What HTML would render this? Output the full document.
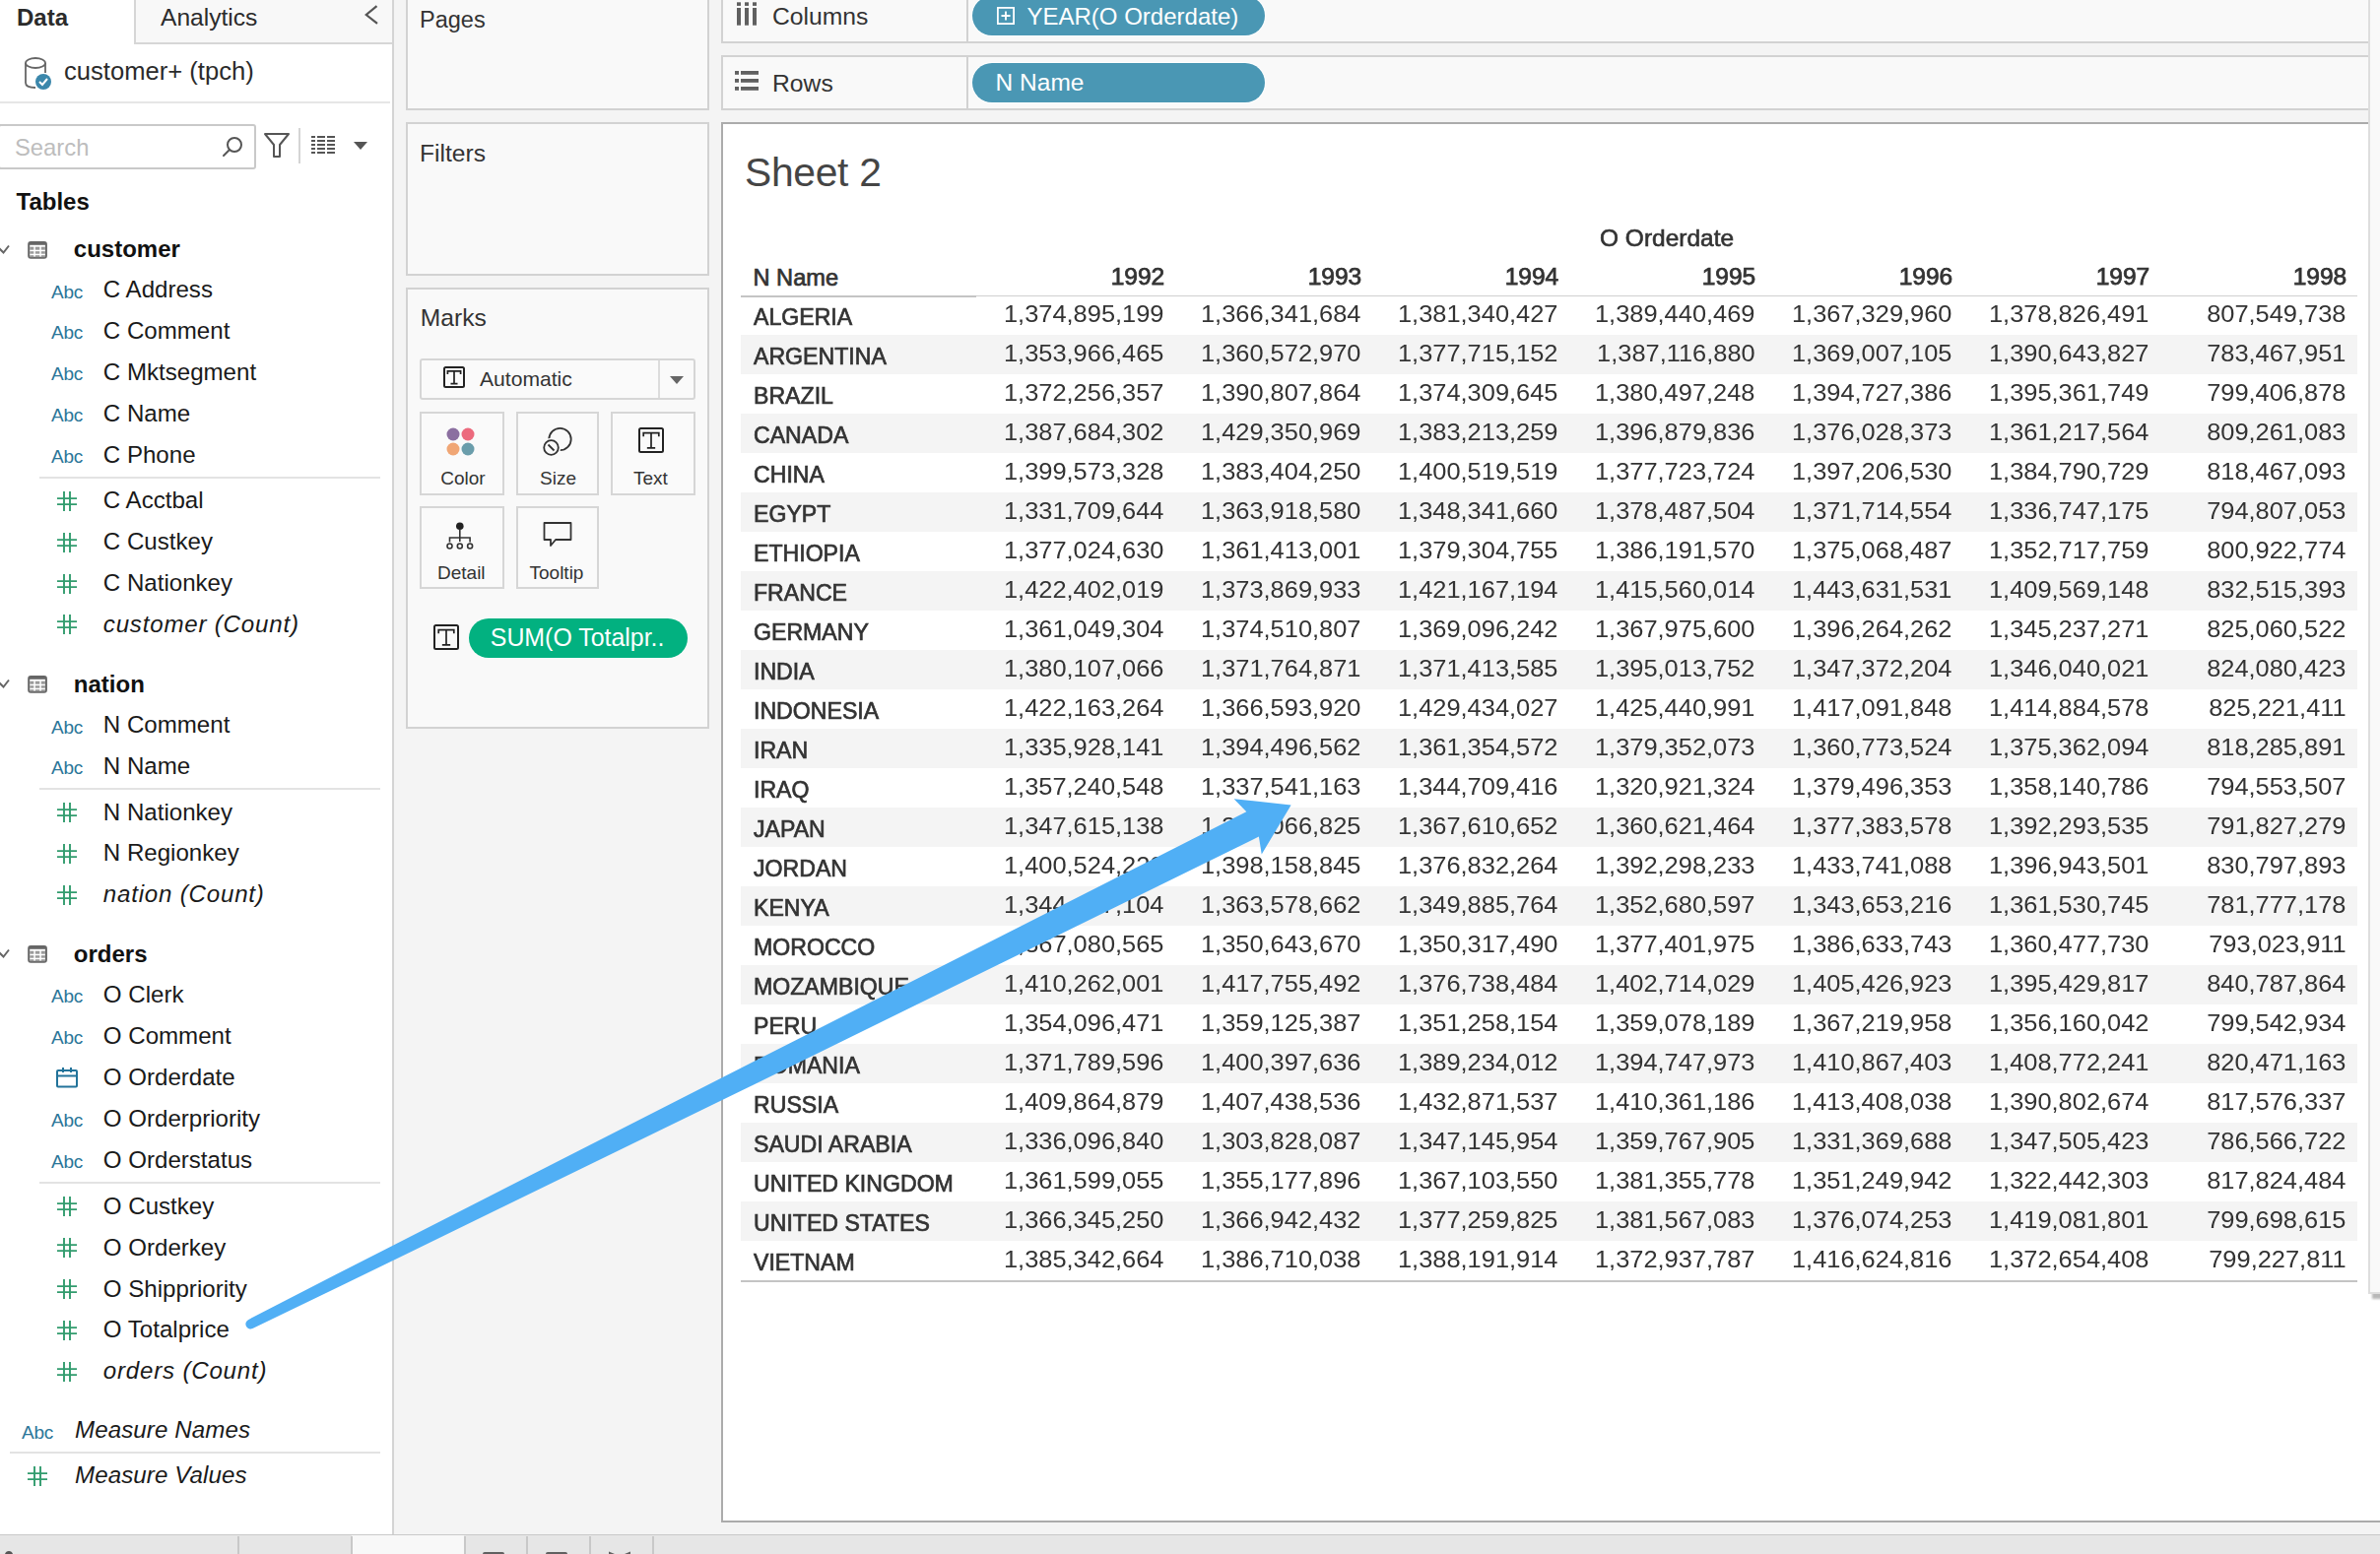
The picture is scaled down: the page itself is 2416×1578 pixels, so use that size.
<!DOCTYPE html>
<html><head><meta charset="utf-8"><style>
html,body{margin:0;padding:0;width:2416px;height:1578px;overflow:hidden;background:#f3f3f3;}
body{position:relative;font-family:"Liberation Sans", sans-serif;}
.r{position:absolute;display:block;}
.t{position:absolute;line-height:1;white-space:pre;font-family:"Liberation Sans", sans-serif;}
</style></head><body>
<div class="r" style="left:0px;top:0px;width:2416px;height:1578px;background:#f4f4f4;"></div>
<div class="r" style="left:0px;top:0px;width:398px;height:1558px;background:#ffffff;"></div>
<div class="r" style="left:398px;top:0px;width:2px;height:1558px;background:#d4d4d4;"></div>
<div class="r" style="left:136px;top:0px;width:262px;height:45px;background:#f8f8f8;border-left:2px solid #d6d6d6;border-bottom:2px solid #d6d6d6;box-sizing:border-box;"></div>
<div class="t" style="left:17.00px;top:5.68px;font-size:24px;color:#2b2b2b;font-weight:bold;font-style:normal;letter-spacing:0px;">Data</div>
<div class="t" style="left:163.00px;top:5.98px;font-size:24.6px;color:#2b2b2b;font-weight:normal;font-style:normal;letter-spacing:0px;">Analytics</div>
<svg class="r" style="left:366px;top:4px;" width="20" height="24" viewBox="0 0 20 24"><path d="M16.5 2.2 L5.8 11 L17 19.8" fill="none" stroke="#555" stroke-width="2.2"/></svg>
<svg class="r" style="left:22px;top:56px;" width="36" height="38" viewBox="0 0 36 38"><ellipse cx="14" cy="8" rx="10" ry="5" fill="none" stroke="#666" stroke-width="1.8"/><path d="M4 8 V28 Q4 33 14 33" fill="none" stroke="#666" stroke-width="1.8"/><path d="M24 8 V18" fill="none" stroke="#666" stroke-width="1.8"/><circle cx="22" cy="27" r="8" fill="#3b87ab"/><path d="M18 27 L21 30 L26 24" fill="none" stroke="#fff" stroke-width="2"/></svg>
<div class="t" style="left:65.00px;top:59.83px;font-size:25.6px;color:#2b2b2b;font-weight:normal;font-style:normal;letter-spacing:0px;">customer+ (tpch)</div>
<div class="r" style="left:0px;top:103px;width:396px;height:2px;background:#e6e6e6;"></div>
<div class="r" style="left:-2px;top:126px;width:262px;height:46px;background:#fff;border:2px solid #c9c9c9;border-radius:3px;box-sizing:border-box;"></div>
<div class="t" style="left:15.00px;top:137.85px;font-size:23.8px;color:#bdbdbd;font-weight:normal;font-style:normal;letter-spacing:0px;">Search</div>
<svg class="r" style="left:222px;top:134px;" width="26" height="28" viewBox="0 0 26 28"><circle cx="16" cy="13" r="7" fill="none" stroke="#555" stroke-width="2"/><path d="M11 18 L5 24" stroke="#555" stroke-width="2" stroke-linecap="round"/></svg>
<svg class="r" style="left:266px;top:134px;" width="30" height="28" viewBox="0 0 30 28"><path d="M3 2 H27 L18 13 V25 H12 V13 Z" fill="none" stroke="#555" stroke-width="2" stroke-linejoin="round"/></svg>
<div class="r" style="left:303px;top:130px;width:2px;height:36px;background:#d4d4d4;"></div>
<svg class="r" style="left:314px;top:136px;" width="28" height="22" viewBox="0 0 28 22"><rect x="2" y="2" width="4" height="2" fill="#555"/><rect x="8" y="2" width="8" height="2" fill="#555"/><rect x="18" y="2" width="8" height="2" fill="#555"/><rect x="2" y="6" width="4" height="2" fill="#555"/><rect x="8" y="6" width="8" height="2" fill="#555"/><rect x="18" y="6" width="8" height="2" fill="#555"/><rect x="2" y="10" width="4" height="2" fill="#555"/><rect x="8" y="10" width="8" height="2" fill="#555"/><rect x="18" y="10" width="8" height="2" fill="#555"/><rect x="2" y="14" width="4" height="2" fill="#555"/><rect x="8" y="14" width="8" height="2" fill="#555"/><rect x="18" y="14" width="8" height="2" fill="#555"/><rect x="2" y="18" width="4" height="2" fill="#555"/><rect x="8" y="18" width="8" height="2" fill="#555"/><rect x="18" y="18" width="8" height="2" fill="#555"/></svg>
<svg class="r" style="left:356px;top:141px;" width="20" height="14" viewBox="0 0 20 14"><path d="M3 3 H17 L10 11 Z" fill="#555"/></svg>
<div class="t" style="left:16.50px;top:192.68px;font-size:24px;color:#111;font-weight:bold;font-style:normal;letter-spacing:0px;">Tables</div>
<svg class="r" style="left:0px;top:247px;" width="12" height="14" viewBox="0 0 12 14"><path d="M-2 4 L3.5 9.5 L9 2.5" fill="none" stroke="#666" stroke-width="2"/></svg>
<svg class="r" style="left:27px;top:243.5px;" width="23" height="20" viewBox="0 0 23 20"><rect x="2.2" y="2" width="17.7" height="15.8" rx="2" fill="none" stroke="#666" stroke-width="2"/><rect x="2.2" y="2" width="17.7" height="2.8" fill="#666"/><rect x="3.2" y="6.7" width="4.1" height="3" fill="#9a9a9a"/><rect x="3.2" y="11.2" width="4.1" height="2.5" fill="#9a9a9a"/><rect x="3.2" y="15.2" width="4.1" height="2" fill="#9a9a9a"/><rect x="8.8" y="6.7" width="4.5" height="3" fill="#9a9a9a"/><rect x="8.8" y="11.2" width="4.5" height="2.5" fill="#9a9a9a"/><rect x="8.8" y="15.2" width="4.5" height="2" fill="#9a9a9a"/><rect x="14.8" y="6.7" width="4.1" height="3" fill="#9a9a9a"/><rect x="14.8" y="11.2" width="4.1" height="2.5" fill="#9a9a9a"/><rect x="14.8" y="15.2" width="4.1" height="2" fill="#9a9a9a"/></svg>
<div class="t" style="left:74.80px;top:241.48px;font-size:24px;color:#111;font-weight:bold;font-style:normal;letter-spacing:0px;">customer</div>
<div class="t" style="left:52.00px;top:286.62px;font-size:19px;color:#2b7699;font-weight:normal;font-style:normal;letter-spacing:-0.2px;">Abc</div>
<div class="t" style="left:104.80px;top:282.30px;font-size:24.1px;color:#1a1a1a;font-weight:normal;font-style:normal;letter-spacing:0px;">C Address</div>
<div class="t" style="left:52.00px;top:328.47px;font-size:19px;color:#2b7699;font-weight:normal;font-style:normal;letter-spacing:-0.2px;">Abc</div>
<div class="t" style="left:104.80px;top:324.15px;font-size:24.1px;color:#1a1a1a;font-weight:normal;font-style:normal;letter-spacing:0px;">C Comment</div>
<div class="t" style="left:52.00px;top:370.32px;font-size:19px;color:#2b7699;font-weight:normal;font-style:normal;letter-spacing:-0.2px;">Abc</div>
<div class="t" style="left:104.80px;top:366.00px;font-size:24.1px;color:#1a1a1a;font-weight:normal;font-style:normal;letter-spacing:0px;">C Mktsegment</div>
<div class="t" style="left:52.00px;top:412.17px;font-size:19px;color:#2b7699;font-weight:normal;font-style:normal;letter-spacing:-0.2px;">Abc</div>
<div class="t" style="left:104.80px;top:407.85px;font-size:24.1px;color:#1a1a1a;font-weight:normal;font-style:normal;letter-spacing:0px;">C Name</div>
<div class="t" style="left:52.00px;top:454.02px;font-size:19px;color:#2b7699;font-weight:normal;font-style:normal;letter-spacing:-0.2px;">Abc</div>
<div class="t" style="left:104.80px;top:449.70px;font-size:24.1px;color:#1a1a1a;font-weight:normal;font-style:normal;letter-spacing:0px;">C Phone</div>
<div class="r" style="left:40px;top:483.5px;width:346px;height:2px;background:#e3e3e3;"></div>
<svg class="r" style="left:57px;top:497.79999999999995px;" width="22" height="22" viewBox="0 0 22 22"><path d="M8 1 V21 M14 1 V21 M1 8.1 H21 M1 14.1 H21" stroke="#329c6e" stroke-width="1.9" fill="none"/></svg>
<div class="t" style="left:104.80px;top:496.40px;font-size:24.1px;color:#1a1a1a;font-weight:normal;font-style:normal;letter-spacing:0px;">C Acctbal</div>
<svg class="r" style="left:57px;top:539.65px;" width="22" height="22" viewBox="0 0 22 22"><path d="M8 1 V21 M14 1 V21 M1 8.1 H21 M1 14.1 H21" stroke="#329c6e" stroke-width="1.9" fill="none"/></svg>
<div class="t" style="left:104.80px;top:538.25px;font-size:24.1px;color:#1a1a1a;font-weight:normal;font-style:normal;letter-spacing:0px;">C Custkey</div>
<svg class="r" style="left:57px;top:581.5px;" width="22" height="22" viewBox="0 0 22 22"><path d="M8 1 V21 M14 1 V21 M1 8.1 H21 M1 14.1 H21" stroke="#329c6e" stroke-width="1.9" fill="none"/></svg>
<div class="t" style="left:104.80px;top:580.10px;font-size:24.1px;color:#1a1a1a;font-weight:normal;font-style:normal;letter-spacing:0px;">C Nationkey</div>
<svg class="r" style="left:57px;top:623.3499999999999px;" width="22" height="22" viewBox="0 0 22 22"><path d="M8 1 V21 M14 1 V21 M1 8.1 H21 M1 14.1 H21" stroke="#329c6e" stroke-width="1.9" fill="none"/></svg>
<div class="t" style="left:104.80px;top:621.95px;font-size:24.1px;color:#1a1a1a;font-weight:normal;font-style:italic;letter-spacing:0.8px;">customer (Count)</div>
<svg class="r" style="left:0px;top:688.4px;" width="12" height="14" viewBox="0 0 12 14"><path d="M-2 4 L3.5 9.5 L9 2.5" fill="none" stroke="#666" stroke-width="2"/></svg>
<svg class="r" style="left:27px;top:684.9px;" width="23" height="20" viewBox="0 0 23 20"><rect x="2.2" y="2" width="17.7" height="15.8" rx="2" fill="none" stroke="#666" stroke-width="2"/><rect x="2.2" y="2" width="17.7" height="2.8" fill="#666"/><rect x="3.2" y="6.7" width="4.1" height="3" fill="#9a9a9a"/><rect x="3.2" y="11.2" width="4.1" height="2.5" fill="#9a9a9a"/><rect x="3.2" y="15.2" width="4.1" height="2" fill="#9a9a9a"/><rect x="8.8" y="6.7" width="4.5" height="3" fill="#9a9a9a"/><rect x="8.8" y="11.2" width="4.5" height="2.5" fill="#9a9a9a"/><rect x="8.8" y="15.2" width="4.5" height="2" fill="#9a9a9a"/><rect x="14.8" y="6.7" width="4.1" height="3" fill="#9a9a9a"/><rect x="14.8" y="11.2" width="4.1" height="2.5" fill="#9a9a9a"/><rect x="14.8" y="15.2" width="4.1" height="2" fill="#9a9a9a"/></svg>
<div class="t" style="left:74.80px;top:682.88px;font-size:24px;color:#111;font-weight:bold;font-style:normal;letter-spacing:0px;">nation</div>
<div class="t" style="left:52.00px;top:728.52px;font-size:19px;color:#2b7699;font-weight:normal;font-style:normal;letter-spacing:-0.2px;">Abc</div>
<div class="t" style="left:104.80px;top:724.20px;font-size:24.1px;color:#1a1a1a;font-weight:normal;font-style:normal;letter-spacing:0px;">N Comment</div>
<div class="t" style="left:52.00px;top:770.37px;font-size:19px;color:#2b7699;font-weight:normal;font-style:normal;letter-spacing:-0.2px;">Abc</div>
<div class="t" style="left:104.80px;top:766.05px;font-size:24.1px;color:#1a1a1a;font-weight:normal;font-style:normal;letter-spacing:0px;">N Name</div>
<div class="r" style="left:40px;top:800px;width:346px;height:2px;background:#e3e3e3;"></div>
<svg class="r" style="left:57px;top:814.0px;" width="22" height="22" viewBox="0 0 22 22"><path d="M8 1 V21 M14 1 V21 M1 8.1 H21 M1 14.1 H21" stroke="#329c6e" stroke-width="1.9" fill="none"/></svg>
<div class="t" style="left:104.80px;top:812.60px;font-size:24.1px;color:#1a1a1a;font-weight:normal;font-style:normal;letter-spacing:0px;">N Nationkey</div>
<svg class="r" style="left:57px;top:855.85px;" width="22" height="22" viewBox="0 0 22 22"><path d="M8 1 V21 M14 1 V21 M1 8.1 H21 M1 14.1 H21" stroke="#329c6e" stroke-width="1.9" fill="none"/></svg>
<div class="t" style="left:104.80px;top:854.45px;font-size:24.1px;color:#1a1a1a;font-weight:normal;font-style:normal;letter-spacing:0px;">N Regionkey</div>
<svg class="r" style="left:57px;top:897.7px;" width="22" height="22" viewBox="0 0 22 22"><path d="M8 1 V21 M14 1 V21 M1 8.1 H21 M1 14.1 H21" stroke="#329c6e" stroke-width="1.9" fill="none"/></svg>
<div class="t" style="left:104.80px;top:896.30px;font-size:24.1px;color:#1a1a1a;font-weight:normal;font-style:italic;letter-spacing:0.8px;">nation (Count)</div>
<svg class="r" style="left:0px;top:962.3px;" width="12" height="14" viewBox="0 0 12 14"><path d="M-2 4 L3.5 9.5 L9 2.5" fill="none" stroke="#666" stroke-width="2"/></svg>
<svg class="r" style="left:27px;top:958.8px;" width="23" height="20" viewBox="0 0 23 20"><rect x="2.2" y="2" width="17.7" height="15.8" rx="2" fill="none" stroke="#666" stroke-width="2"/><rect x="2.2" y="2" width="17.7" height="2.8" fill="#666"/><rect x="3.2" y="6.7" width="4.1" height="3" fill="#9a9a9a"/><rect x="3.2" y="11.2" width="4.1" height="2.5" fill="#9a9a9a"/><rect x="3.2" y="15.2" width="4.1" height="2" fill="#9a9a9a"/><rect x="8.8" y="6.7" width="4.5" height="3" fill="#9a9a9a"/><rect x="8.8" y="11.2" width="4.5" height="2.5" fill="#9a9a9a"/><rect x="8.8" y="15.2" width="4.5" height="2" fill="#9a9a9a"/><rect x="14.8" y="6.7" width="4.1" height="3" fill="#9a9a9a"/><rect x="14.8" y="11.2" width="4.1" height="2.5" fill="#9a9a9a"/><rect x="14.8" y="15.2" width="4.1" height="2" fill="#9a9a9a"/></svg>
<div class="t" style="left:74.80px;top:956.78px;font-size:24px;color:#111;font-weight:bold;font-style:normal;letter-spacing:0px;">orders</div>
<div class="t" style="left:52.00px;top:1002.42px;font-size:19px;color:#2b7699;font-weight:normal;font-style:normal;letter-spacing:-0.2px;">Abc</div>
<div class="t" style="left:104.80px;top:998.10px;font-size:24.1px;color:#1a1a1a;font-weight:normal;font-style:normal;letter-spacing:0px;">O Clerk</div>
<div class="t" style="left:52.00px;top:1044.27px;font-size:19px;color:#2b7699;font-weight:normal;font-style:normal;letter-spacing:-0.2px;">Abc</div>
<div class="t" style="left:104.80px;top:1039.95px;font-size:24.1px;color:#1a1a1a;font-weight:normal;font-style:normal;letter-spacing:0px;">O Comment</div>
<svg class="r" style="left:56px;top:1082.2px;" width="24" height="24" viewBox="0 0 24 24"><rect x="2" y="5" width="20" height="16.5" rx="1" fill="none" stroke="#22739a" stroke-width="2"/><path d="M2 10.5 H22" stroke="#22739a" stroke-width="2"/><path d="M8 2 V7 M16 2 V7" stroke="#22739a" stroke-width="2"/></svg>
<div class="t" style="left:104.80px;top:1081.80px;font-size:24.1px;color:#1a1a1a;font-weight:normal;font-style:normal;letter-spacing:0px;">O Orderdate</div>
<div class="t" style="left:52.00px;top:1127.97px;font-size:19px;color:#2b7699;font-weight:normal;font-style:normal;letter-spacing:-0.2px;">Abc</div>
<div class="t" style="left:104.80px;top:1123.65px;font-size:24.1px;color:#1a1a1a;font-weight:normal;font-style:normal;letter-spacing:0px;">O Orderpriority</div>
<div class="t" style="left:52.00px;top:1169.82px;font-size:19px;color:#2b7699;font-weight:normal;font-style:normal;letter-spacing:-0.2px;">Abc</div>
<div class="t" style="left:104.80px;top:1165.50px;font-size:24.1px;color:#1a1a1a;font-weight:normal;font-style:normal;letter-spacing:0px;">O Orderstatus</div>
<div class="r" style="left:40px;top:1200px;width:346px;height:2px;background:#e3e3e3;"></div>
<svg class="r" style="left:57px;top:1214.3px;" width="22" height="22" viewBox="0 0 22 22"><path d="M8 1 V21 M14 1 V21 M1 8.1 H21 M1 14.1 H21" stroke="#329c6e" stroke-width="1.9" fill="none"/></svg>
<div class="t" style="left:104.80px;top:1212.90px;font-size:24.1px;color:#1a1a1a;font-weight:normal;font-style:normal;letter-spacing:0px;">O Custkey</div>
<svg class="r" style="left:57px;top:1256.1499999999999px;" width="22" height="22" viewBox="0 0 22 22"><path d="M8 1 V21 M14 1 V21 M1 8.1 H21 M1 14.1 H21" stroke="#329c6e" stroke-width="1.9" fill="none"/></svg>
<div class="t" style="left:104.80px;top:1254.75px;font-size:24.1px;color:#1a1a1a;font-weight:normal;font-style:normal;letter-spacing:0px;">O Orderkey</div>
<svg class="r" style="left:57px;top:1298.0px;" width="22" height="22" viewBox="0 0 22 22"><path d="M8 1 V21 M14 1 V21 M1 8.1 H21 M1 14.1 H21" stroke="#329c6e" stroke-width="1.9" fill="none"/></svg>
<div class="t" style="left:104.80px;top:1296.60px;font-size:24.1px;color:#1a1a1a;font-weight:normal;font-style:normal;letter-spacing:0px;">O Shippriority</div>
<svg class="r" style="left:57px;top:1339.85px;" width="22" height="22" viewBox="0 0 22 22"><path d="M8 1 V21 M14 1 V21 M1 8.1 H21 M1 14.1 H21" stroke="#329c6e" stroke-width="1.9" fill="none"/></svg>
<div class="t" style="left:104.80px;top:1338.45px;font-size:24.1px;color:#1a1a1a;font-weight:normal;font-style:normal;letter-spacing:0px;">O Totalprice</div>
<svg class="r" style="left:57px;top:1381.7px;" width="22" height="22" viewBox="0 0 22 22"><path d="M8 1 V21 M14 1 V21 M1 8.1 H21 M1 14.1 H21" stroke="#329c6e" stroke-width="1.9" fill="none"/></svg>
<div class="t" style="left:104.80px;top:1380.30px;font-size:24.1px;color:#1a1a1a;font-weight:normal;font-style:italic;letter-spacing:0.8px;">orders (Count)</div>
<div class="t" style="left:22.00px;top:1444.72px;font-size:19px;color:#2b7699;font-weight:normal;font-style:normal;letter-spacing:-0.2px;">Abc</div>
<div class="t" style="left:76.00px;top:1440.40px;font-size:24.1px;color:#1a1a1a;font-weight:normal;font-style:italic;letter-spacing:0.1px;">Measure Names</div>
<div class="r" style="left:10px;top:1474px;width:376px;height:2px;background:#e3e3e3;"></div>
<svg class="r" style="left:27px;top:1488.2px;" width="22" height="22" viewBox="0 0 22 22"><path d="M8 1 V21 M14 1 V21 M1 8.1 H21 M1 14.1 H21" stroke="#329c6e" stroke-width="1.9" fill="none"/></svg>
<div class="t" style="left:76.00px;top:1486.10px;font-size:24.1px;color:#1a1a1a;font-weight:normal;font-style:italic;letter-spacing:0.1px;">Measure Values</div>
<div class="r" style="left:0px;top:1558px;width:2416px;height:20px;background:#e6e6e6;border-top:1.5px solid #c9c9c9;box-sizing:border-box;"></div>
<div class="r" style="left:357px;top:1559px;width:114px;height:19px;background:#f8f8f8;"></div>
<div class="r" style="left:241px;top:1560px;width:1.5px;height:18px;background:#c8c8c8;"></div>
<div class="r" style="left:356px;top:1560px;width:1.5px;height:18px;background:#c8c8c8;"></div>
<div class="r" style="left:471px;top:1560px;width:1.5px;height:18px;background:#c8c8c8;"></div>
<div class="r" style="left:534px;top:1560px;width:1.5px;height:18px;background:#c8c8c8;"></div>
<div class="r" style="left:598px;top:1560px;width:1.5px;height:18px;background:#c8c8c8;"></div>
<div class="r" style="left:662px;top:1560px;width:1.5px;height:18px;background:#c8c8c8;"></div>
<div class="r" style="left:490px;top:1576px;width:22px;height:3px;background:#606060;border-radius:2px 2px 0 0;"></div>
<div class="r" style="left:554px;top:1576px;width:22px;height:3px;background:#606060;border-radius:2px 2px 0 0;"></div>
<svg class="r" style="left:616px;top:1574px;" width="26" height="4" viewBox="0 0 26 4"><path d="M2 1.5 L8 4 L2 4 Z M24 1.5 L18 4 L24 4 Z" fill="#606060"/></svg>
<svg class="r" style="left:0px;top:1572px;" width="16" height="6" viewBox="0 0 16 6"><path d="M5 6 Q6 3 9 3 Q12 3 13 6 Z" fill="#555"/></svg>
<div class="r" style="left:412px;top:-4px;width:308px;height:116px;background:#f9f9f9;border:2px solid #d2d2d2;box-sizing:border-box;"></div>
<div class="t" style="left:426.00px;top:8.71px;font-size:23.5px;color:#333;font-weight:normal;font-style:normal;letter-spacing:0px;">Pages</div>
<div class="r" style="left:412px;top:124px;width:308px;height:156px;background:#f9f9f9;border:2px solid #d2d2d2;box-sizing:border-box;"></div>
<div class="t" style="left:426.00px;top:143.88px;font-size:24.6px;color:#333;font-weight:normal;font-style:normal;letter-spacing:0px;">Filters</div>
<div class="r" style="left:412px;top:292px;width:308px;height:448px;background:#f9f9f9;border:2px solid #d2d2d2;box-sizing:border-box;"></div>
<div class="t" style="left:426.80px;top:311.18px;font-size:24.6px;color:#333;font-weight:normal;font-style:normal;letter-spacing:0px;">Marks</div>
<div class="r" style="left:426px;top:364px;width:280px;height:42px;background:#fafafa;border:2px solid #d6d6d6;border-radius:3px;box-sizing:border-box;"></div>
<div class="r" style="left:668px;top:366px;width:2px;height:38px;background:#dcdcdc;"></div>
<svg class="r" style="left:677px;top:379px;" width="20" height="14" viewBox="0 0 20 14"><path d="M3 3 H17 L10 11 Z" fill="#666"/></svg>
<svg class="r" style="left:450px;top:372px;" width="22" height="22" viewBox="0 0 22 22"><rect x="1" y="1" width="20" height="20" rx="1.5" fill="none" stroke="#222" stroke-width="2"/><path d="M4.40 7.92 V4.84 H17.60 V7.92 M11.00 4.84 V17.60 M7.48 17.60 H14.52" stroke="#222" stroke-width="1.7" fill="none"/></svg>
<div class="t" style="left:487.00px;top:373.74px;font-size:21.1px;color:#333;font-weight:normal;font-style:normal;letter-spacing:0px;">Automatic</div>
<div class="r" style="left:426px;top:418px;width:86px;height:85px;background:#fafafa;border:2px solid #d6d6d6;box-sizing:border-box;"></div>
<div class="t" style="left:447.30px;top:475.92px;font-size:19px;color:#333;font-weight:normal;font-style:normal;letter-spacing:0px;">Color</div>
<div class="r" style="left:524px;top:418px;width:84px;height:85px;background:#fafafa;border:2px solid #d6d6d6;box-sizing:border-box;"></div>
<div class="t" style="left:548.00px;top:475.92px;font-size:19px;color:#333;font-weight:normal;font-style:normal;letter-spacing:0px;">Size</div>
<div class="r" style="left:620px;top:418px;width:86px;height:85px;background:#fafafa;border:2px solid #d6d6d6;box-sizing:border-box;"></div>
<div class="t" style="left:643.00px;top:475.92px;font-size:19px;color:#333;font-weight:normal;font-style:normal;letter-spacing:0px;">Text</div>
<div class="r" style="left:426px;top:514px;width:86px;height:84px;background:#fafafa;border:2px solid #d6d6d6;box-sizing:border-box;"></div>
<div class="t" style="left:444.00px;top:571.92px;font-size:19px;color:#333;font-weight:normal;font-style:normal;letter-spacing:0px;">Detail</div>
<div class="r" style="left:524px;top:514px;width:84px;height:84px;background:#fafafa;border:2px solid #d6d6d6;box-sizing:border-box;"></div>
<div class="t" style="left:537.50px;top:571.92px;font-size:19px;color:#333;font-weight:normal;font-style:normal;letter-spacing:0px;">Tooltip</div>
<svg class="r" style="left:453px;top:433.5px;" width="32" height="32" viewBox="0 0 32 32"><circle cx="7" cy="7" r="6.5" fill="#8b6fa0"/><circle cx="22" cy="7" r="6.5" fill="#ec6a7d"/><circle cx="7" cy="22" r="6.5" fill="#f0a675"/><circle cx="22" cy="22" r="6.5" fill="#6a9dab"/></svg>
<svg class="r" style="left:550px;top:432px;" width="32" height="32" viewBox="0 0 32 32"><circle cx="18.5" cy="14" r="11.2" fill="none" stroke="#333" stroke-width="1.8"/><circle cx="9.5" cy="22.5" r="7.3" fill="#fafafa" stroke="#fafafa" stroke-width="5"/><circle cx="9.5" cy="22.5" r="7.3" fill="none" stroke="#333" stroke-width="1.8"/><path d="M6.5 19.5 L12.5 25.5" stroke="#333" stroke-width="1.8"/></svg>
<svg class="r" style="left:648px;top:434px;" width="26" height="26" viewBox="0 0 26 26"><rect x="1" y="1" width="24" height="24" rx="1.5" fill="none" stroke="#222" stroke-width="2"/><path d="M5.20 9.36 V5.72 H20.80 V9.36 M13.00 5.72 V20.80 M8.84 20.80 H17.16" stroke="#222" stroke-width="1.7" fill="none"/></svg>
<svg class="r" style="left:452px;top:530px;" width="30" height="30" viewBox="0 0 30 30"><circle cx="14.8" cy="4.2" r="3.8" fill="#222"/><path d="M14.8 7.5 V20 M4.5 20.5 V16 H25.1 V20.5" stroke="#333" stroke-width="1.6" fill="none"/><circle cx="4.5" cy="24.5" r="2.5" fill="none" stroke="#333" stroke-width="1.6"/><circle cx="14.8" cy="24.5" r="2.5" fill="none" stroke="#333" stroke-width="1.6"/><circle cx="25.1" cy="24.5" r="2.5" fill="none" stroke="#333" stroke-width="1.6"/></svg>
<svg class="r" style="left:550px;top:528px;" width="32" height="30" viewBox="0 0 32 30"><path d="M2.5 3 H29.5 V20 H14 L9 26 V20 H2.5 Z" fill="none" stroke="#333" stroke-width="1.8" stroke-linejoin="round"/></svg>
<svg class="r" style="left:440px;top:634px;" width="26" height="26" viewBox="0 0 26 26"><rect x="1" y="1" width="24" height="24" rx="1.5" fill="none" stroke="#222" stroke-width="2"/><path d="M5.20 9.36 V5.72 H20.80 V9.36 M13.00 5.72 V20.80 M8.84 20.80 H17.16" stroke="#222" stroke-width="1.7" fill="none"/></svg>
<div class="r" style="left:476px;top:628px;width:222px;height:40px;background:#02b180;border-radius:20px;"></div>
<div class="t" style="left:497.80px;top:634.92px;font-size:24.9px;color:#ffffff;font-weight:normal;font-style:normal;letter-spacing:0px;">SUM(O Totalpr..</div>
<div class="r" style="left:732px;top:-4px;width:1680px;height:48px;background:#f9f9f9;border:2px solid #d2d2d2;box-sizing:border-box;"></div>
<div class="r" style="left:981px;top:-4px;width:2px;height:48px;background:#d2d2d2;"></div>
<svg class="r" style="left:744px;top:2px" width="28" height="24" viewBox="0 0 28 24"><rect x="4" y="0.3" width="4" height="3.6" fill="#606060"/><rect x="12" y="0.3" width="4" height="3.6" fill="#606060"/><rect x="20" y="0.3" width="4" height="3.6" fill="#606060"/><rect x="4" y="6" width="4" height="17.7" fill="#606060"/><rect x="12" y="6" width="4" height="17.7" fill="#606060"/><rect x="20" y="6" width="4" height="17.7" fill="#606060"/></svg>
<div class="t" style="left:784.00px;top:4.79px;font-size:24.7px;color:#333;font-weight:normal;font-style:normal;letter-spacing:0px;">Columns</div>
<div class="r" style="left:987px;top:-4px;width:297px;height:40px;background:#4a97b4;border-radius:20px;box-shadow:0 0 0 1px #fff;"></div>
<svg class="r" style="left:1011px;top:6px;" width="20" height="20" viewBox="0 0 20 20"><rect x="1.9" y="1.9" width="16.2" height="16.2" fill="none" stroke="#fff" stroke-width="1.8"/><path d="M10 5.5 V14.5 M5.5 10 H14.5" stroke="#fff" stroke-width="1.8"/></svg>
<div class="t" style="left:1042.50px;top:5.48px;font-size:24px;color:#fff;font-weight:normal;font-style:normal;letter-spacing:0px;">YEAR(O Orderdate)</div>
<div class="r" style="left:732px;top:56px;width:1680px;height:56px;background:#f9f9f9;border:2px solid #d2d2d2;box-sizing:border-box;"></div>
<div class="r" style="left:981px;top:56px;width:2px;height:56px;background:#d2d2d2;"></div>
<svg class="r" style="left:744px;top:70px" width="28" height="24" viewBox="0 0 28 24"><rect x="2" y="2" width="4" height="3.8" fill="#606060"/><rect x="8" y="2" width="18" height="3.8" fill="#606060"/><rect x="2" y="10" width="4" height="3.8" fill="#606060"/><rect x="8" y="10" width="18" height="3.8" fill="#606060"/><rect x="2" y="18" width="4" height="3.8" fill="#606060"/><rect x="8" y="18" width="18" height="3.8" fill="#606060"/></svg>
<div class="t" style="left:784.00px;top:73.09px;font-size:24.7px;color:#333;font-weight:normal;font-style:normal;letter-spacing:0px;">Rows</div>
<div class="r" style="left:987px;top:64px;width:297px;height:40px;background:#4a97b4;border-radius:20px;box-shadow:0 0 0 1px #fff;"></div>
<div class="t" style="left:1010.60px;top:71.56px;font-size:24.5px;color:#fff;font-weight:normal;font-style:normal;letter-spacing:0px;">N Name</div>
<div class="r" style="left:732px;top:124px;width:1690px;height:1422px;background:#ffffff;border:2px solid #ababab;box-sizing:border-box;"></div>
<div class="t" style="left:756.00px;top:155.46px;font-size:40.8px;color:#454545;font-weight:normal;font-style:normal;letter-spacing:-0.3px;">Sheet 2</div>
<div class="t" style="left:1624.00px;top:229.98px;font-size:24px;color:#333;font-weight:normal;font-style:normal;letter-spacing:0px;-webkit-text-stroke:0.6px #333;transform:scaleX(1.02);transform-origin:0 50%;">O Orderdate</div>
<div class="t" style="left:764.50px;top:270.82px;font-size:23.6px;color:#333;font-weight:normal;font-style:normal;letter-spacing:0px;-webkit-text-stroke:0.7px #333;">N Name</div>
<div class="t" style="right:1233.50px;top:270.01px;font-size:23.5px;color:#333;font-weight:normal;font-style:normal;letter-spacing:0px;-webkit-text-stroke:0.75px #333;transform:scaleX(1.045);transform-origin:100% 50%;">1992</div>
<div class="t" style="right:1033.50px;top:270.01px;font-size:23.5px;color:#333;font-weight:normal;font-style:normal;letter-spacing:0px;-webkit-text-stroke:0.75px #333;transform:scaleX(1.045);transform-origin:100% 50%;">1993</div>
<div class="t" style="right:833.50px;top:270.01px;font-size:23.5px;color:#333;font-weight:normal;font-style:normal;letter-spacing:0px;-webkit-text-stroke:0.75px #333;transform:scaleX(1.045);transform-origin:100% 50%;">1994</div>
<div class="t" style="right:633.50px;top:270.01px;font-size:23.5px;color:#333;font-weight:normal;font-style:normal;letter-spacing:0px;-webkit-text-stroke:0.75px #333;transform:scaleX(1.045);transform-origin:100% 50%;">1995</div>
<div class="t" style="right:433.50px;top:270.01px;font-size:23.5px;color:#333;font-weight:normal;font-style:normal;letter-spacing:0px;-webkit-text-stroke:0.75px #333;transform:scaleX(1.045);transform-origin:100% 50%;">1996</div>
<div class="t" style="right:233.50px;top:270.01px;font-size:23.5px;color:#333;font-weight:normal;font-style:normal;letter-spacing:0px;-webkit-text-stroke:0.75px #333;transform:scaleX(1.045);transform-origin:100% 50%;">1997</div>
<div class="t" style="right:33.50px;top:270.01px;font-size:23.5px;color:#333;font-weight:normal;font-style:normal;letter-spacing:0px;-webkit-text-stroke:0.75px #333;transform:scaleX(1.045);transform-origin:100% 50%;">1998</div>
<div class="r" style="left:752px;top:300px;width:239px;height:2px;background:#c4c4c4;"></div>
<div class="r" style="left:991px;top:300px;width:1402px;height:1px;background:#d0d0d0;"></div>
<div class="r" style="left:752px;top:340.00px;width:1641px;height:39.5px;background:#f4f4f4"></div>
<div class="r" style="left:752px;top:420.00px;width:1641px;height:39.5px;background:#f4f4f4"></div>
<div class="r" style="left:752px;top:500.00px;width:1641px;height:39.5px;background:#f4f4f4"></div>
<div class="r" style="left:752px;top:580.00px;width:1641px;height:39.5px;background:#f4f4f4"></div>
<div class="r" style="left:752px;top:660.00px;width:1641px;height:39.5px;background:#f4f4f4"></div>
<div class="r" style="left:752px;top:740.00px;width:1641px;height:39.5px;background:#f4f4f4"></div>
<div class="r" style="left:752px;top:820.00px;width:1641px;height:39.5px;background:#f4f4f4"></div>
<div class="r" style="left:752px;top:900.00px;width:1641px;height:39.5px;background:#f4f4f4"></div>
<div class="r" style="left:752px;top:980.00px;width:1641px;height:39.5px;background:#f4f4f4"></div>
<div class="r" style="left:752px;top:1060.00px;width:1641px;height:39.5px;background:#f4f4f4"></div>
<div class="r" style="left:752px;top:1140.00px;width:1641px;height:39.5px;background:#f4f4f4"></div>
<div class="r" style="left:752px;top:1220.00px;width:1641px;height:39.5px;background:#f4f4f4"></div>
<div class="t" style="left:764.50px;top:309.53px;font-size:24px;color:#333;font-weight:normal;font-style:normal;letter-spacing:0px;-webkit-text-stroke:0.7px #333;transform:scaleX(0.963);transform-origin:0 50%;">ALGERIA</div>
<div class="t" style="right:1234.60px;top:307.48px;font-size:24px;color:#333;font-weight:normal;font-style:normal;letter-spacing:0px;transform:scaleX(1.059);transform-origin:100% 50%;">1,374,895,199</div>
<div class="t" style="right:1034.60px;top:307.48px;font-size:24px;color:#333;font-weight:normal;font-style:normal;letter-spacing:0px;transform:scaleX(1.059);transform-origin:100% 50%;">1,366,341,684</div>
<div class="t" style="right:834.60px;top:307.48px;font-size:24px;color:#333;font-weight:normal;font-style:normal;letter-spacing:0px;transform:scaleX(1.059);transform-origin:100% 50%;">1,381,340,427</div>
<div class="t" style="right:634.60px;top:307.48px;font-size:24px;color:#333;font-weight:normal;font-style:normal;letter-spacing:0px;transform:scaleX(1.059);transform-origin:100% 50%;">1,389,440,469</div>
<div class="t" style="right:434.60px;top:307.48px;font-size:24px;color:#333;font-weight:normal;font-style:normal;letter-spacing:0px;transform:scaleX(1.059);transform-origin:100% 50%;">1,367,329,960</div>
<div class="t" style="right:234.60px;top:307.48px;font-size:24px;color:#333;font-weight:normal;font-style:normal;letter-spacing:0px;transform:scaleX(1.059);transform-origin:100% 50%;">1,378,826,491</div>
<div class="t" style="right:34.60px;top:307.48px;font-size:24px;color:#333;font-weight:normal;font-style:normal;letter-spacing:0px;transform:scaleX(1.059);transform-origin:100% 50%;">807,549,738</div>
<div class="t" style="left:764.50px;top:349.53px;font-size:24px;color:#333;font-weight:normal;font-style:normal;letter-spacing:0px;-webkit-text-stroke:0.7px #333;transform:scaleX(0.963);transform-origin:0 50%;">ARGENTINA</div>
<div class="t" style="right:1234.60px;top:347.48px;font-size:24px;color:#333;font-weight:normal;font-style:normal;letter-spacing:0px;transform:scaleX(1.059);transform-origin:100% 50%;">1,353,966,465</div>
<div class="t" style="right:1034.60px;top:347.48px;font-size:24px;color:#333;font-weight:normal;font-style:normal;letter-spacing:0px;transform:scaleX(1.059);transform-origin:100% 50%;">1,360,572,970</div>
<div class="t" style="right:834.60px;top:347.48px;font-size:24px;color:#333;font-weight:normal;font-style:normal;letter-spacing:0px;transform:scaleX(1.059);transform-origin:100% 50%;">1,377,715,152</div>
<div class="t" style="right:634.60px;top:347.48px;font-size:24px;color:#333;font-weight:normal;font-style:normal;letter-spacing:0px;transform:scaleX(1.059);transform-origin:100% 50%;">1,387,116,880</div>
<div class="t" style="right:434.60px;top:347.48px;font-size:24px;color:#333;font-weight:normal;font-style:normal;letter-spacing:0px;transform:scaleX(1.059);transform-origin:100% 50%;">1,369,007,105</div>
<div class="t" style="right:234.60px;top:347.48px;font-size:24px;color:#333;font-weight:normal;font-style:normal;letter-spacing:0px;transform:scaleX(1.059);transform-origin:100% 50%;">1,390,643,827</div>
<div class="t" style="right:34.60px;top:347.48px;font-size:24px;color:#333;font-weight:normal;font-style:normal;letter-spacing:0px;transform:scaleX(1.059);transform-origin:100% 50%;">783,467,951</div>
<div class="t" style="left:764.50px;top:389.53px;font-size:24px;color:#333;font-weight:normal;font-style:normal;letter-spacing:0px;-webkit-text-stroke:0.7px #333;transform:scaleX(0.963);transform-origin:0 50%;">BRAZIL</div>
<div class="t" style="right:1234.60px;top:387.48px;font-size:24px;color:#333;font-weight:normal;font-style:normal;letter-spacing:0px;transform:scaleX(1.059);transform-origin:100% 50%;">1,372,256,357</div>
<div class="t" style="right:1034.60px;top:387.48px;font-size:24px;color:#333;font-weight:normal;font-style:normal;letter-spacing:0px;transform:scaleX(1.059);transform-origin:100% 50%;">1,390,807,864</div>
<div class="t" style="right:834.60px;top:387.48px;font-size:24px;color:#333;font-weight:normal;font-style:normal;letter-spacing:0px;transform:scaleX(1.059);transform-origin:100% 50%;">1,374,309,645</div>
<div class="t" style="right:634.60px;top:387.48px;font-size:24px;color:#333;font-weight:normal;font-style:normal;letter-spacing:0px;transform:scaleX(1.059);transform-origin:100% 50%;">1,380,497,248</div>
<div class="t" style="right:434.60px;top:387.48px;font-size:24px;color:#333;font-weight:normal;font-style:normal;letter-spacing:0px;transform:scaleX(1.059);transform-origin:100% 50%;">1,394,727,386</div>
<div class="t" style="right:234.60px;top:387.48px;font-size:24px;color:#333;font-weight:normal;font-style:normal;letter-spacing:0px;transform:scaleX(1.059);transform-origin:100% 50%;">1,395,361,749</div>
<div class="t" style="right:34.60px;top:387.48px;font-size:24px;color:#333;font-weight:normal;font-style:normal;letter-spacing:0px;transform:scaleX(1.059);transform-origin:100% 50%;">799,406,878</div>
<div class="t" style="left:764.50px;top:429.53px;font-size:24px;color:#333;font-weight:normal;font-style:normal;letter-spacing:0px;-webkit-text-stroke:0.7px #333;transform:scaleX(0.963);transform-origin:0 50%;">CANADA</div>
<div class="t" style="right:1234.60px;top:427.48px;font-size:24px;color:#333;font-weight:normal;font-style:normal;letter-spacing:0px;transform:scaleX(1.059);transform-origin:100% 50%;">1,387,684,302</div>
<div class="t" style="right:1034.60px;top:427.48px;font-size:24px;color:#333;font-weight:normal;font-style:normal;letter-spacing:0px;transform:scaleX(1.059);transform-origin:100% 50%;">1,429,350,969</div>
<div class="t" style="right:834.60px;top:427.48px;font-size:24px;color:#333;font-weight:normal;font-style:normal;letter-spacing:0px;transform:scaleX(1.059);transform-origin:100% 50%;">1,383,213,259</div>
<div class="t" style="right:634.60px;top:427.48px;font-size:24px;color:#333;font-weight:normal;font-style:normal;letter-spacing:0px;transform:scaleX(1.059);transform-origin:100% 50%;">1,396,879,836</div>
<div class="t" style="right:434.60px;top:427.48px;font-size:24px;color:#333;font-weight:normal;font-style:normal;letter-spacing:0px;transform:scaleX(1.059);transform-origin:100% 50%;">1,376,028,373</div>
<div class="t" style="right:234.60px;top:427.48px;font-size:24px;color:#333;font-weight:normal;font-style:normal;letter-spacing:0px;transform:scaleX(1.059);transform-origin:100% 50%;">1,361,217,564</div>
<div class="t" style="right:34.60px;top:427.48px;font-size:24px;color:#333;font-weight:normal;font-style:normal;letter-spacing:0px;transform:scaleX(1.059);transform-origin:100% 50%;">809,261,083</div>
<div class="t" style="left:764.50px;top:469.53px;font-size:24px;color:#333;font-weight:normal;font-style:normal;letter-spacing:0px;-webkit-text-stroke:0.7px #333;transform:scaleX(0.963);transform-origin:0 50%;">CHINA</div>
<div class="t" style="right:1234.60px;top:467.48px;font-size:24px;color:#333;font-weight:normal;font-style:normal;letter-spacing:0px;transform:scaleX(1.059);transform-origin:100% 50%;">1,399,573,328</div>
<div class="t" style="right:1034.60px;top:467.48px;font-size:24px;color:#333;font-weight:normal;font-style:normal;letter-spacing:0px;transform:scaleX(1.059);transform-origin:100% 50%;">1,383,404,250</div>
<div class="t" style="right:834.60px;top:467.48px;font-size:24px;color:#333;font-weight:normal;font-style:normal;letter-spacing:0px;transform:scaleX(1.059);transform-origin:100% 50%;">1,400,519,519</div>
<div class="t" style="right:634.60px;top:467.48px;font-size:24px;color:#333;font-weight:normal;font-style:normal;letter-spacing:0px;transform:scaleX(1.059);transform-origin:100% 50%;">1,377,723,724</div>
<div class="t" style="right:434.60px;top:467.48px;font-size:24px;color:#333;font-weight:normal;font-style:normal;letter-spacing:0px;transform:scaleX(1.059);transform-origin:100% 50%;">1,397,206,530</div>
<div class="t" style="right:234.60px;top:467.48px;font-size:24px;color:#333;font-weight:normal;font-style:normal;letter-spacing:0px;transform:scaleX(1.059);transform-origin:100% 50%;">1,384,790,729</div>
<div class="t" style="right:34.60px;top:467.48px;font-size:24px;color:#333;font-weight:normal;font-style:normal;letter-spacing:0px;transform:scaleX(1.059);transform-origin:100% 50%;">818,467,093</div>
<div class="t" style="left:764.50px;top:509.53px;font-size:24px;color:#333;font-weight:normal;font-style:normal;letter-spacing:0px;-webkit-text-stroke:0.7px #333;transform:scaleX(0.963);transform-origin:0 50%;">EGYPT</div>
<div class="t" style="right:1234.60px;top:507.48px;font-size:24px;color:#333;font-weight:normal;font-style:normal;letter-spacing:0px;transform:scaleX(1.059);transform-origin:100% 50%;">1,331,709,644</div>
<div class="t" style="right:1034.60px;top:507.48px;font-size:24px;color:#333;font-weight:normal;font-style:normal;letter-spacing:0px;transform:scaleX(1.059);transform-origin:100% 50%;">1,363,918,580</div>
<div class="t" style="right:834.60px;top:507.48px;font-size:24px;color:#333;font-weight:normal;font-style:normal;letter-spacing:0px;transform:scaleX(1.059);transform-origin:100% 50%;">1,348,341,660</div>
<div class="t" style="right:634.60px;top:507.48px;font-size:24px;color:#333;font-weight:normal;font-style:normal;letter-spacing:0px;transform:scaleX(1.059);transform-origin:100% 50%;">1,378,487,504</div>
<div class="t" style="right:434.60px;top:507.48px;font-size:24px;color:#333;font-weight:normal;font-style:normal;letter-spacing:0px;transform:scaleX(1.059);transform-origin:100% 50%;">1,371,714,554</div>
<div class="t" style="right:234.60px;top:507.48px;font-size:24px;color:#333;font-weight:normal;font-style:normal;letter-spacing:0px;transform:scaleX(1.059);transform-origin:100% 50%;">1,336,747,175</div>
<div class="t" style="right:34.60px;top:507.48px;font-size:24px;color:#333;font-weight:normal;font-style:normal;letter-spacing:0px;transform:scaleX(1.059);transform-origin:100% 50%;">794,807,053</div>
<div class="t" style="left:764.50px;top:549.53px;font-size:24px;color:#333;font-weight:normal;font-style:normal;letter-spacing:0px;-webkit-text-stroke:0.7px #333;transform:scaleX(0.963);transform-origin:0 50%;">ETHIOPIA</div>
<div class="t" style="right:1234.60px;top:547.48px;font-size:24px;color:#333;font-weight:normal;font-style:normal;letter-spacing:0px;transform:scaleX(1.059);transform-origin:100% 50%;">1,377,024,630</div>
<div class="t" style="right:1034.60px;top:547.48px;font-size:24px;color:#333;font-weight:normal;font-style:normal;letter-spacing:0px;transform:scaleX(1.059);transform-origin:100% 50%;">1,361,413,001</div>
<div class="t" style="right:834.60px;top:547.48px;font-size:24px;color:#333;font-weight:normal;font-style:normal;letter-spacing:0px;transform:scaleX(1.059);transform-origin:100% 50%;">1,379,304,755</div>
<div class="t" style="right:634.60px;top:547.48px;font-size:24px;color:#333;font-weight:normal;font-style:normal;letter-spacing:0px;transform:scaleX(1.059);transform-origin:100% 50%;">1,386,191,570</div>
<div class="t" style="right:434.60px;top:547.48px;font-size:24px;color:#333;font-weight:normal;font-style:normal;letter-spacing:0px;transform:scaleX(1.059);transform-origin:100% 50%;">1,375,068,487</div>
<div class="t" style="right:234.60px;top:547.48px;font-size:24px;color:#333;font-weight:normal;font-style:normal;letter-spacing:0px;transform:scaleX(1.059);transform-origin:100% 50%;">1,352,717,759</div>
<div class="t" style="right:34.60px;top:547.48px;font-size:24px;color:#333;font-weight:normal;font-style:normal;letter-spacing:0px;transform:scaleX(1.059);transform-origin:100% 50%;">800,922,774</div>
<div class="t" style="left:764.50px;top:589.53px;font-size:24px;color:#333;font-weight:normal;font-style:normal;letter-spacing:0px;-webkit-text-stroke:0.7px #333;transform:scaleX(0.963);transform-origin:0 50%;">FRANCE</div>
<div class="t" style="right:1234.60px;top:587.48px;font-size:24px;color:#333;font-weight:normal;font-style:normal;letter-spacing:0px;transform:scaleX(1.059);transform-origin:100% 50%;">1,422,402,019</div>
<div class="t" style="right:1034.60px;top:587.48px;font-size:24px;color:#333;font-weight:normal;font-style:normal;letter-spacing:0px;transform:scaleX(1.059);transform-origin:100% 50%;">1,373,869,933</div>
<div class="t" style="right:834.60px;top:587.48px;font-size:24px;color:#333;font-weight:normal;font-style:normal;letter-spacing:0px;transform:scaleX(1.059);transform-origin:100% 50%;">1,421,167,194</div>
<div class="t" style="right:634.60px;top:587.48px;font-size:24px;color:#333;font-weight:normal;font-style:normal;letter-spacing:0px;transform:scaleX(1.059);transform-origin:100% 50%;">1,415,560,014</div>
<div class="t" style="right:434.60px;top:587.48px;font-size:24px;color:#333;font-weight:normal;font-style:normal;letter-spacing:0px;transform:scaleX(1.059);transform-origin:100% 50%;">1,443,631,531</div>
<div class="t" style="right:234.60px;top:587.48px;font-size:24px;color:#333;font-weight:normal;font-style:normal;letter-spacing:0px;transform:scaleX(1.059);transform-origin:100% 50%;">1,409,569,148</div>
<div class="t" style="right:34.60px;top:587.48px;font-size:24px;color:#333;font-weight:normal;font-style:normal;letter-spacing:0px;transform:scaleX(1.059);transform-origin:100% 50%;">832,515,393</div>
<div class="t" style="left:764.50px;top:629.53px;font-size:24px;color:#333;font-weight:normal;font-style:normal;letter-spacing:0px;-webkit-text-stroke:0.7px #333;transform:scaleX(0.963);transform-origin:0 50%;">GERMANY</div>
<div class="t" style="right:1234.60px;top:627.48px;font-size:24px;color:#333;font-weight:normal;font-style:normal;letter-spacing:0px;transform:scaleX(1.059);transform-origin:100% 50%;">1,361,049,304</div>
<div class="t" style="right:1034.60px;top:627.48px;font-size:24px;color:#333;font-weight:normal;font-style:normal;letter-spacing:0px;transform:scaleX(1.059);transform-origin:100% 50%;">1,374,510,807</div>
<div class="t" style="right:834.60px;top:627.48px;font-size:24px;color:#333;font-weight:normal;font-style:normal;letter-spacing:0px;transform:scaleX(1.059);transform-origin:100% 50%;">1,369,096,242</div>
<div class="t" style="right:634.60px;top:627.48px;font-size:24px;color:#333;font-weight:normal;font-style:normal;letter-spacing:0px;transform:scaleX(1.059);transform-origin:100% 50%;">1,367,975,600</div>
<div class="t" style="right:434.60px;top:627.48px;font-size:24px;color:#333;font-weight:normal;font-style:normal;letter-spacing:0px;transform:scaleX(1.059);transform-origin:100% 50%;">1,396,264,262</div>
<div class="t" style="right:234.60px;top:627.48px;font-size:24px;color:#333;font-weight:normal;font-style:normal;letter-spacing:0px;transform:scaleX(1.059);transform-origin:100% 50%;">1,345,237,271</div>
<div class="t" style="right:34.60px;top:627.48px;font-size:24px;color:#333;font-weight:normal;font-style:normal;letter-spacing:0px;transform:scaleX(1.059);transform-origin:100% 50%;">825,060,522</div>
<div class="t" style="left:764.50px;top:669.53px;font-size:24px;color:#333;font-weight:normal;font-style:normal;letter-spacing:0px;-webkit-text-stroke:0.7px #333;transform:scaleX(0.963);transform-origin:0 50%;">INDIA</div>
<div class="t" style="right:1234.60px;top:667.48px;font-size:24px;color:#333;font-weight:normal;font-style:normal;letter-spacing:0px;transform:scaleX(1.059);transform-origin:100% 50%;">1,380,107,066</div>
<div class="t" style="right:1034.60px;top:667.48px;font-size:24px;color:#333;font-weight:normal;font-style:normal;letter-spacing:0px;transform:scaleX(1.059);transform-origin:100% 50%;">1,371,764,871</div>
<div class="t" style="right:834.60px;top:667.48px;font-size:24px;color:#333;font-weight:normal;font-style:normal;letter-spacing:0px;transform:scaleX(1.059);transform-origin:100% 50%;">1,371,413,585</div>
<div class="t" style="right:634.60px;top:667.48px;font-size:24px;color:#333;font-weight:normal;font-style:normal;letter-spacing:0px;transform:scaleX(1.059);transform-origin:100% 50%;">1,395,013,752</div>
<div class="t" style="right:434.60px;top:667.48px;font-size:24px;color:#333;font-weight:normal;font-style:normal;letter-spacing:0px;transform:scaleX(1.059);transform-origin:100% 50%;">1,347,372,204</div>
<div class="t" style="right:234.60px;top:667.48px;font-size:24px;color:#333;font-weight:normal;font-style:normal;letter-spacing:0px;transform:scaleX(1.059);transform-origin:100% 50%;">1,346,040,021</div>
<div class="t" style="right:34.60px;top:667.48px;font-size:24px;color:#333;font-weight:normal;font-style:normal;letter-spacing:0px;transform:scaleX(1.059);transform-origin:100% 50%;">824,080,423</div>
<div class="t" style="left:764.50px;top:709.53px;font-size:24px;color:#333;font-weight:normal;font-style:normal;letter-spacing:0px;-webkit-text-stroke:0.7px #333;transform:scaleX(0.963);transform-origin:0 50%;">INDONESIA</div>
<div class="t" style="right:1234.60px;top:707.48px;font-size:24px;color:#333;font-weight:normal;font-style:normal;letter-spacing:0px;transform:scaleX(1.059);transform-origin:100% 50%;">1,422,163,264</div>
<div class="t" style="right:1034.60px;top:707.48px;font-size:24px;color:#333;font-weight:normal;font-style:normal;letter-spacing:0px;transform:scaleX(1.059);transform-origin:100% 50%;">1,366,593,920</div>
<div class="t" style="right:834.60px;top:707.48px;font-size:24px;color:#333;font-weight:normal;font-style:normal;letter-spacing:0px;transform:scaleX(1.059);transform-origin:100% 50%;">1,429,434,027</div>
<div class="t" style="right:634.60px;top:707.48px;font-size:24px;color:#333;font-weight:normal;font-style:normal;letter-spacing:0px;transform:scaleX(1.059);transform-origin:100% 50%;">1,425,440,991</div>
<div class="t" style="right:434.60px;top:707.48px;font-size:24px;color:#333;font-weight:normal;font-style:normal;letter-spacing:0px;transform:scaleX(1.059);transform-origin:100% 50%;">1,417,091,848</div>
<div class="t" style="right:234.60px;top:707.48px;font-size:24px;color:#333;font-weight:normal;font-style:normal;letter-spacing:0px;transform:scaleX(1.059);transform-origin:100% 50%;">1,414,884,578</div>
<div class="t" style="right:34.60px;top:707.48px;font-size:24px;color:#333;font-weight:normal;font-style:normal;letter-spacing:0px;transform:scaleX(1.059);transform-origin:100% 50%;">825,221,411</div>
<div class="t" style="left:764.50px;top:749.53px;font-size:24px;color:#333;font-weight:normal;font-style:normal;letter-spacing:0px;-webkit-text-stroke:0.7px #333;transform:scaleX(0.963);transform-origin:0 50%;">IRAN</div>
<div class="t" style="right:1234.60px;top:747.48px;font-size:24px;color:#333;font-weight:normal;font-style:normal;letter-spacing:0px;transform:scaleX(1.059);transform-origin:100% 50%;">1,335,928,141</div>
<div class="t" style="right:1034.60px;top:747.48px;font-size:24px;color:#333;font-weight:normal;font-style:normal;letter-spacing:0px;transform:scaleX(1.059);transform-origin:100% 50%;">1,394,496,562</div>
<div class="t" style="right:834.60px;top:747.48px;font-size:24px;color:#333;font-weight:normal;font-style:normal;letter-spacing:0px;transform:scaleX(1.059);transform-origin:100% 50%;">1,361,354,572</div>
<div class="t" style="right:634.60px;top:747.48px;font-size:24px;color:#333;font-weight:normal;font-style:normal;letter-spacing:0px;transform:scaleX(1.059);transform-origin:100% 50%;">1,379,352,073</div>
<div class="t" style="right:434.60px;top:747.48px;font-size:24px;color:#333;font-weight:normal;font-style:normal;letter-spacing:0px;transform:scaleX(1.059);transform-origin:100% 50%;">1,360,773,524</div>
<div class="t" style="right:234.60px;top:747.48px;font-size:24px;color:#333;font-weight:normal;font-style:normal;letter-spacing:0px;transform:scaleX(1.059);transform-origin:100% 50%;">1,375,362,094</div>
<div class="t" style="right:34.60px;top:747.48px;font-size:24px;color:#333;font-weight:normal;font-style:normal;letter-spacing:0px;transform:scaleX(1.059);transform-origin:100% 50%;">818,285,891</div>
<div class="t" style="left:764.50px;top:789.53px;font-size:24px;color:#333;font-weight:normal;font-style:normal;letter-spacing:0px;-webkit-text-stroke:0.7px #333;transform:scaleX(0.963);transform-origin:0 50%;">IRAQ</div>
<div class="t" style="right:1234.60px;top:787.48px;font-size:24px;color:#333;font-weight:normal;font-style:normal;letter-spacing:0px;transform:scaleX(1.059);transform-origin:100% 50%;">1,357,240,548</div>
<div class="t" style="right:1034.60px;top:787.48px;font-size:24px;color:#333;font-weight:normal;font-style:normal;letter-spacing:0px;transform:scaleX(1.059);transform-origin:100% 50%;">1,337,541,163</div>
<div class="t" style="right:834.60px;top:787.48px;font-size:24px;color:#333;font-weight:normal;font-style:normal;letter-spacing:0px;transform:scaleX(1.059);transform-origin:100% 50%;">1,344,709,416</div>
<div class="t" style="right:634.60px;top:787.48px;font-size:24px;color:#333;font-weight:normal;font-style:normal;letter-spacing:0px;transform:scaleX(1.059);transform-origin:100% 50%;">1,320,921,324</div>
<div class="t" style="right:434.60px;top:787.48px;font-size:24px;color:#333;font-weight:normal;font-style:normal;letter-spacing:0px;transform:scaleX(1.059);transform-origin:100% 50%;">1,379,496,353</div>
<div class="t" style="right:234.60px;top:787.48px;font-size:24px;color:#333;font-weight:normal;font-style:normal;letter-spacing:0px;transform:scaleX(1.059);transform-origin:100% 50%;">1,358,140,786</div>
<div class="t" style="right:34.60px;top:787.48px;font-size:24px;color:#333;font-weight:normal;font-style:normal;letter-spacing:0px;transform:scaleX(1.059);transform-origin:100% 50%;">794,553,507</div>
<div class="t" style="left:764.50px;top:829.53px;font-size:24px;color:#333;font-weight:normal;font-style:normal;letter-spacing:0px;-webkit-text-stroke:0.7px #333;transform:scaleX(0.963);transform-origin:0 50%;">JAPAN</div>
<div class="t" style="right:1234.60px;top:827.48px;font-size:24px;color:#333;font-weight:normal;font-style:normal;letter-spacing:0px;transform:scaleX(1.059);transform-origin:100% 50%;">1,347,615,138</div>
<div class="t" style="right:1034.60px;top:827.48px;font-size:24px;color:#333;font-weight:normal;font-style:normal;letter-spacing:0px;transform:scaleX(1.059);transform-origin:100% 50%;">1,327,066,825</div>
<div class="t" style="right:834.60px;top:827.48px;font-size:24px;color:#333;font-weight:normal;font-style:normal;letter-spacing:0px;transform:scaleX(1.059);transform-origin:100% 50%;">1,367,610,652</div>
<div class="t" style="right:634.60px;top:827.48px;font-size:24px;color:#333;font-weight:normal;font-style:normal;letter-spacing:0px;transform:scaleX(1.059);transform-origin:100% 50%;">1,360,621,464</div>
<div class="t" style="right:434.60px;top:827.48px;font-size:24px;color:#333;font-weight:normal;font-style:normal;letter-spacing:0px;transform:scaleX(1.059);transform-origin:100% 50%;">1,377,383,578</div>
<div class="t" style="right:234.60px;top:827.48px;font-size:24px;color:#333;font-weight:normal;font-style:normal;letter-spacing:0px;transform:scaleX(1.059);transform-origin:100% 50%;">1,392,293,535</div>
<div class="t" style="right:34.60px;top:827.48px;font-size:24px;color:#333;font-weight:normal;font-style:normal;letter-spacing:0px;transform:scaleX(1.059);transform-origin:100% 50%;">791,827,279</div>
<div class="t" style="left:764.50px;top:869.53px;font-size:24px;color:#333;font-weight:normal;font-style:normal;letter-spacing:0px;-webkit-text-stroke:0.7px #333;transform:scaleX(0.963);transform-origin:0 50%;">JORDAN</div>
<div class="t" style="right:1234.60px;top:867.48px;font-size:24px;color:#333;font-weight:normal;font-style:normal;letter-spacing:0px;transform:scaleX(1.059);transform-origin:100% 50%;">1,400,524,222</div>
<div class="t" style="right:1034.60px;top:867.48px;font-size:24px;color:#333;font-weight:normal;font-style:normal;letter-spacing:0px;transform:scaleX(1.059);transform-origin:100% 50%;">1,398,158,845</div>
<div class="t" style="right:834.60px;top:867.48px;font-size:24px;color:#333;font-weight:normal;font-style:normal;letter-spacing:0px;transform:scaleX(1.059);transform-origin:100% 50%;">1,376,832,264</div>
<div class="t" style="right:634.60px;top:867.48px;font-size:24px;color:#333;font-weight:normal;font-style:normal;letter-spacing:0px;transform:scaleX(1.059);transform-origin:100% 50%;">1,392,298,233</div>
<div class="t" style="right:434.60px;top:867.48px;font-size:24px;color:#333;font-weight:normal;font-style:normal;letter-spacing:0px;transform:scaleX(1.059);transform-origin:100% 50%;">1,433,741,088</div>
<div class="t" style="right:234.60px;top:867.48px;font-size:24px;color:#333;font-weight:normal;font-style:normal;letter-spacing:0px;transform:scaleX(1.059);transform-origin:100% 50%;">1,396,943,501</div>
<div class="t" style="right:34.60px;top:867.48px;font-size:24px;color:#333;font-weight:normal;font-style:normal;letter-spacing:0px;transform:scaleX(1.059);transform-origin:100% 50%;">830,797,893</div>
<div class="t" style="left:764.50px;top:909.53px;font-size:24px;color:#333;font-weight:normal;font-style:normal;letter-spacing:0px;-webkit-text-stroke:0.7px #333;transform:scaleX(0.963);transform-origin:0 50%;">KENYA</div>
<div class="t" style="right:1234.60px;top:907.48px;font-size:24px;color:#333;font-weight:normal;font-style:normal;letter-spacing:0px;transform:scaleX(1.059);transform-origin:100% 50%;">1,344,417,104</div>
<div class="t" style="right:1034.60px;top:907.48px;font-size:24px;color:#333;font-weight:normal;font-style:normal;letter-spacing:0px;transform:scaleX(1.059);transform-origin:100% 50%;">1,363,578,662</div>
<div class="t" style="right:834.60px;top:907.48px;font-size:24px;color:#333;font-weight:normal;font-style:normal;letter-spacing:0px;transform:scaleX(1.059);transform-origin:100% 50%;">1,349,885,764</div>
<div class="t" style="right:634.60px;top:907.48px;font-size:24px;color:#333;font-weight:normal;font-style:normal;letter-spacing:0px;transform:scaleX(1.059);transform-origin:100% 50%;">1,352,680,597</div>
<div class="t" style="right:434.60px;top:907.48px;font-size:24px;color:#333;font-weight:normal;font-style:normal;letter-spacing:0px;transform:scaleX(1.059);transform-origin:100% 50%;">1,343,653,216</div>
<div class="t" style="right:234.60px;top:907.48px;font-size:24px;color:#333;font-weight:normal;font-style:normal;letter-spacing:0px;transform:scaleX(1.059);transform-origin:100% 50%;">1,361,530,745</div>
<div class="t" style="right:34.60px;top:907.48px;font-size:24px;color:#333;font-weight:normal;font-style:normal;letter-spacing:0px;transform:scaleX(1.059);transform-origin:100% 50%;">781,777,178</div>
<div class="t" style="left:764.50px;top:949.53px;font-size:24px;color:#333;font-weight:normal;font-style:normal;letter-spacing:0px;-webkit-text-stroke:0.7px #333;transform:scaleX(0.963);transform-origin:0 50%;">MOROCCO</div>
<div class="t" style="right:1234.60px;top:947.48px;font-size:24px;color:#333;font-weight:normal;font-style:normal;letter-spacing:0px;transform:scaleX(1.059);transform-origin:100% 50%;">1,367,080,565</div>
<div class="t" style="right:1034.60px;top:947.48px;font-size:24px;color:#333;font-weight:normal;font-style:normal;letter-spacing:0px;transform:scaleX(1.059);transform-origin:100% 50%;">1,350,643,670</div>
<div class="t" style="right:834.60px;top:947.48px;font-size:24px;color:#333;font-weight:normal;font-style:normal;letter-spacing:0px;transform:scaleX(1.059);transform-origin:100% 50%;">1,350,317,490</div>
<div class="t" style="right:634.60px;top:947.48px;font-size:24px;color:#333;font-weight:normal;font-style:normal;letter-spacing:0px;transform:scaleX(1.059);transform-origin:100% 50%;">1,377,401,975</div>
<div class="t" style="right:434.60px;top:947.48px;font-size:24px;color:#333;font-weight:normal;font-style:normal;letter-spacing:0px;transform:scaleX(1.059);transform-origin:100% 50%;">1,386,633,743</div>
<div class="t" style="right:234.60px;top:947.48px;font-size:24px;color:#333;font-weight:normal;font-style:normal;letter-spacing:0px;transform:scaleX(1.059);transform-origin:100% 50%;">1,360,477,730</div>
<div class="t" style="right:34.60px;top:947.48px;font-size:24px;color:#333;font-weight:normal;font-style:normal;letter-spacing:0px;transform:scaleX(1.059);transform-origin:100% 50%;">793,023,911</div>
<div class="t" style="left:764.50px;top:989.53px;font-size:24px;color:#333;font-weight:normal;font-style:normal;letter-spacing:0px;-webkit-text-stroke:0.7px #333;transform:scaleX(0.963);transform-origin:0 50%;">MOZAMBIQUE</div>
<div class="t" style="right:1234.60px;top:987.48px;font-size:24px;color:#333;font-weight:normal;font-style:normal;letter-spacing:0px;transform:scaleX(1.059);transform-origin:100% 50%;">1,410,262,001</div>
<div class="t" style="right:1034.60px;top:987.48px;font-size:24px;color:#333;font-weight:normal;font-style:normal;letter-spacing:0px;transform:scaleX(1.059);transform-origin:100% 50%;">1,417,755,492</div>
<div class="t" style="right:834.60px;top:987.48px;font-size:24px;color:#333;font-weight:normal;font-style:normal;letter-spacing:0px;transform:scaleX(1.059);transform-origin:100% 50%;">1,376,738,484</div>
<div class="t" style="right:634.60px;top:987.48px;font-size:24px;color:#333;font-weight:normal;font-style:normal;letter-spacing:0px;transform:scaleX(1.059);transform-origin:100% 50%;">1,402,714,029</div>
<div class="t" style="right:434.60px;top:987.48px;font-size:24px;color:#333;font-weight:normal;font-style:normal;letter-spacing:0px;transform:scaleX(1.059);transform-origin:100% 50%;">1,405,426,923</div>
<div class="t" style="right:234.60px;top:987.48px;font-size:24px;color:#333;font-weight:normal;font-style:normal;letter-spacing:0px;transform:scaleX(1.059);transform-origin:100% 50%;">1,395,429,817</div>
<div class="t" style="right:34.60px;top:987.48px;font-size:24px;color:#333;font-weight:normal;font-style:normal;letter-spacing:0px;transform:scaleX(1.059);transform-origin:100% 50%;">840,787,864</div>
<div class="t" style="left:764.50px;top:1029.53px;font-size:24px;color:#333;font-weight:normal;font-style:normal;letter-spacing:0px;-webkit-text-stroke:0.7px #333;transform:scaleX(0.963);transform-origin:0 50%;">PERU</div>
<div class="t" style="right:1234.60px;top:1027.48px;font-size:24px;color:#333;font-weight:normal;font-style:normal;letter-spacing:0px;transform:scaleX(1.059);transform-origin:100% 50%;">1,354,096,471</div>
<div class="t" style="right:1034.60px;top:1027.48px;font-size:24px;color:#333;font-weight:normal;font-style:normal;letter-spacing:0px;transform:scaleX(1.059);transform-origin:100% 50%;">1,359,125,387</div>
<div class="t" style="right:834.60px;top:1027.48px;font-size:24px;color:#333;font-weight:normal;font-style:normal;letter-spacing:0px;transform:scaleX(1.059);transform-origin:100% 50%;">1,351,258,154</div>
<div class="t" style="right:634.60px;top:1027.48px;font-size:24px;color:#333;font-weight:normal;font-style:normal;letter-spacing:0px;transform:scaleX(1.059);transform-origin:100% 50%;">1,359,078,189</div>
<div class="t" style="right:434.60px;top:1027.48px;font-size:24px;color:#333;font-weight:normal;font-style:normal;letter-spacing:0px;transform:scaleX(1.059);transform-origin:100% 50%;">1,367,219,958</div>
<div class="t" style="right:234.60px;top:1027.48px;font-size:24px;color:#333;font-weight:normal;font-style:normal;letter-spacing:0px;transform:scaleX(1.059);transform-origin:100% 50%;">1,356,160,042</div>
<div class="t" style="right:34.60px;top:1027.48px;font-size:24px;color:#333;font-weight:normal;font-style:normal;letter-spacing:0px;transform:scaleX(1.059);transform-origin:100% 50%;">799,542,934</div>
<div class="t" style="left:764.50px;top:1069.53px;font-size:24px;color:#333;font-weight:normal;font-style:normal;letter-spacing:0px;-webkit-text-stroke:0.7px #333;transform:scaleX(0.963);transform-origin:0 50%;">ROMANIA</div>
<div class="t" style="right:1234.60px;top:1067.48px;font-size:24px;color:#333;font-weight:normal;font-style:normal;letter-spacing:0px;transform:scaleX(1.059);transform-origin:100% 50%;">1,371,789,596</div>
<div class="t" style="right:1034.60px;top:1067.48px;font-size:24px;color:#333;font-weight:normal;font-style:normal;letter-spacing:0px;transform:scaleX(1.059);transform-origin:100% 50%;">1,400,397,636</div>
<div class="t" style="right:834.60px;top:1067.48px;font-size:24px;color:#333;font-weight:normal;font-style:normal;letter-spacing:0px;transform:scaleX(1.059);transform-origin:100% 50%;">1,389,234,012</div>
<div class="t" style="right:634.60px;top:1067.48px;font-size:24px;color:#333;font-weight:normal;font-style:normal;letter-spacing:0px;transform:scaleX(1.059);transform-origin:100% 50%;">1,394,747,973</div>
<div class="t" style="right:434.60px;top:1067.48px;font-size:24px;color:#333;font-weight:normal;font-style:normal;letter-spacing:0px;transform:scaleX(1.059);transform-origin:100% 50%;">1,410,867,403</div>
<div class="t" style="right:234.60px;top:1067.48px;font-size:24px;color:#333;font-weight:normal;font-style:normal;letter-spacing:0px;transform:scaleX(1.059);transform-origin:100% 50%;">1,408,772,241</div>
<div class="t" style="right:34.60px;top:1067.48px;font-size:24px;color:#333;font-weight:normal;font-style:normal;letter-spacing:0px;transform:scaleX(1.059);transform-origin:100% 50%;">820,471,163</div>
<div class="t" style="left:764.50px;top:1109.53px;font-size:24px;color:#333;font-weight:normal;font-style:normal;letter-spacing:0px;-webkit-text-stroke:0.7px #333;transform:scaleX(0.963);transform-origin:0 50%;">RUSSIA</div>
<div class="t" style="right:1234.60px;top:1107.48px;font-size:24px;color:#333;font-weight:normal;font-style:normal;letter-spacing:0px;transform:scaleX(1.059);transform-origin:100% 50%;">1,409,864,879</div>
<div class="t" style="right:1034.60px;top:1107.48px;font-size:24px;color:#333;font-weight:normal;font-style:normal;letter-spacing:0px;transform:scaleX(1.059);transform-origin:100% 50%;">1,407,438,536</div>
<div class="t" style="right:834.60px;top:1107.48px;font-size:24px;color:#333;font-weight:normal;font-style:normal;letter-spacing:0px;transform:scaleX(1.059);transform-origin:100% 50%;">1,432,871,537</div>
<div class="t" style="right:634.60px;top:1107.48px;font-size:24px;color:#333;font-weight:normal;font-style:normal;letter-spacing:0px;transform:scaleX(1.059);transform-origin:100% 50%;">1,410,361,186</div>
<div class="t" style="right:434.60px;top:1107.48px;font-size:24px;color:#333;font-weight:normal;font-style:normal;letter-spacing:0px;transform:scaleX(1.059);transform-origin:100% 50%;">1,413,408,038</div>
<div class="t" style="right:234.60px;top:1107.48px;font-size:24px;color:#333;font-weight:normal;font-style:normal;letter-spacing:0px;transform:scaleX(1.059);transform-origin:100% 50%;">1,390,802,674</div>
<div class="t" style="right:34.60px;top:1107.48px;font-size:24px;color:#333;font-weight:normal;font-style:normal;letter-spacing:0px;transform:scaleX(1.059);transform-origin:100% 50%;">817,576,337</div>
<div class="t" style="left:764.50px;top:1149.53px;font-size:24px;color:#333;font-weight:normal;font-style:normal;letter-spacing:0px;-webkit-text-stroke:0.7px #333;transform:scaleX(0.963);transform-origin:0 50%;">SAUDI ARABIA</div>
<div class="t" style="right:1234.60px;top:1147.48px;font-size:24px;color:#333;font-weight:normal;font-style:normal;letter-spacing:0px;transform:scaleX(1.059);transform-origin:100% 50%;">1,336,096,840</div>
<div class="t" style="right:1034.60px;top:1147.48px;font-size:24px;color:#333;font-weight:normal;font-style:normal;letter-spacing:0px;transform:scaleX(1.059);transform-origin:100% 50%;">1,303,828,087</div>
<div class="t" style="right:834.60px;top:1147.48px;font-size:24px;color:#333;font-weight:normal;font-style:normal;letter-spacing:0px;transform:scaleX(1.059);transform-origin:100% 50%;">1,347,145,954</div>
<div class="t" style="right:634.60px;top:1147.48px;font-size:24px;color:#333;font-weight:normal;font-style:normal;letter-spacing:0px;transform:scaleX(1.059);transform-origin:100% 50%;">1,359,767,905</div>
<div class="t" style="right:434.60px;top:1147.48px;font-size:24px;color:#333;font-weight:normal;font-style:normal;letter-spacing:0px;transform:scaleX(1.059);transform-origin:100% 50%;">1,331,369,688</div>
<div class="t" style="right:234.60px;top:1147.48px;font-size:24px;color:#333;font-weight:normal;font-style:normal;letter-spacing:0px;transform:scaleX(1.059);transform-origin:100% 50%;">1,347,505,423</div>
<div class="t" style="right:34.60px;top:1147.48px;font-size:24px;color:#333;font-weight:normal;font-style:normal;letter-spacing:0px;transform:scaleX(1.059);transform-origin:100% 50%;">786,566,722</div>
<div class="t" style="left:764.50px;top:1189.53px;font-size:24px;color:#333;font-weight:normal;font-style:normal;letter-spacing:0px;-webkit-text-stroke:0.7px #333;transform:scaleX(0.963);transform-origin:0 50%;">UNITED KINGDOM</div>
<div class="t" style="right:1234.60px;top:1187.48px;font-size:24px;color:#333;font-weight:normal;font-style:normal;letter-spacing:0px;transform:scaleX(1.059);transform-origin:100% 50%;">1,361,599,055</div>
<div class="t" style="right:1034.60px;top:1187.48px;font-size:24px;color:#333;font-weight:normal;font-style:normal;letter-spacing:0px;transform:scaleX(1.059);transform-origin:100% 50%;">1,355,177,896</div>
<div class="t" style="right:834.60px;top:1187.48px;font-size:24px;color:#333;font-weight:normal;font-style:normal;letter-spacing:0px;transform:scaleX(1.059);transform-origin:100% 50%;">1,367,103,550</div>
<div class="t" style="right:634.60px;top:1187.48px;font-size:24px;color:#333;font-weight:normal;font-style:normal;letter-spacing:0px;transform:scaleX(1.059);transform-origin:100% 50%;">1,381,355,778</div>
<div class="t" style="right:434.60px;top:1187.48px;font-size:24px;color:#333;font-weight:normal;font-style:normal;letter-spacing:0px;transform:scaleX(1.059);transform-origin:100% 50%;">1,351,249,942</div>
<div class="t" style="right:234.60px;top:1187.48px;font-size:24px;color:#333;font-weight:normal;font-style:normal;letter-spacing:0px;transform:scaleX(1.059);transform-origin:100% 50%;">1,322,442,303</div>
<div class="t" style="right:34.60px;top:1187.48px;font-size:24px;color:#333;font-weight:normal;font-style:normal;letter-spacing:0px;transform:scaleX(1.059);transform-origin:100% 50%;">817,824,484</div>
<div class="t" style="left:764.50px;top:1229.53px;font-size:24px;color:#333;font-weight:normal;font-style:normal;letter-spacing:0px;-webkit-text-stroke:0.7px #333;transform:scaleX(0.963);transform-origin:0 50%;">UNITED STATES</div>
<div class="t" style="right:1234.60px;top:1227.48px;font-size:24px;color:#333;font-weight:normal;font-style:normal;letter-spacing:0px;transform:scaleX(1.059);transform-origin:100% 50%;">1,366,345,250</div>
<div class="t" style="right:1034.60px;top:1227.48px;font-size:24px;color:#333;font-weight:normal;font-style:normal;letter-spacing:0px;transform:scaleX(1.059);transform-origin:100% 50%;">1,366,942,432</div>
<div class="t" style="right:834.60px;top:1227.48px;font-size:24px;color:#333;font-weight:normal;font-style:normal;letter-spacing:0px;transform:scaleX(1.059);transform-origin:100% 50%;">1,377,259,825</div>
<div class="t" style="right:634.60px;top:1227.48px;font-size:24px;color:#333;font-weight:normal;font-style:normal;letter-spacing:0px;transform:scaleX(1.059);transform-origin:100% 50%;">1,381,567,083</div>
<div class="t" style="right:434.60px;top:1227.48px;font-size:24px;color:#333;font-weight:normal;font-style:normal;letter-spacing:0px;transform:scaleX(1.059);transform-origin:100% 50%;">1,376,074,253</div>
<div class="t" style="right:234.60px;top:1227.48px;font-size:24px;color:#333;font-weight:normal;font-style:normal;letter-spacing:0px;transform:scaleX(1.059);transform-origin:100% 50%;">1,419,081,801</div>
<div class="t" style="right:34.60px;top:1227.48px;font-size:24px;color:#333;font-weight:normal;font-style:normal;letter-spacing:0px;transform:scaleX(1.059);transform-origin:100% 50%;">799,698,615</div>
<div class="t" style="left:764.50px;top:1269.53px;font-size:24px;color:#333;font-weight:normal;font-style:normal;letter-spacing:0px;-webkit-text-stroke:0.7px #333;transform:scaleX(0.963);transform-origin:0 50%;">VIETNAM</div>
<div class="t" style="right:1234.60px;top:1267.48px;font-size:24px;color:#333;font-weight:normal;font-style:normal;letter-spacing:0px;transform:scaleX(1.059);transform-origin:100% 50%;">1,385,342,664</div>
<div class="t" style="right:1034.60px;top:1267.48px;font-size:24px;color:#333;font-weight:normal;font-style:normal;letter-spacing:0px;transform:scaleX(1.059);transform-origin:100% 50%;">1,386,710,038</div>
<div class="t" style="right:834.60px;top:1267.48px;font-size:24px;color:#333;font-weight:normal;font-style:normal;letter-spacing:0px;transform:scaleX(1.059);transform-origin:100% 50%;">1,388,191,914</div>
<div class="t" style="right:634.60px;top:1267.48px;font-size:24px;color:#333;font-weight:normal;font-style:normal;letter-spacing:0px;transform:scaleX(1.059);transform-origin:100% 50%;">1,372,937,787</div>
<div class="t" style="right:434.60px;top:1267.48px;font-size:24px;color:#333;font-weight:normal;font-style:normal;letter-spacing:0px;transform:scaleX(1.059);transform-origin:100% 50%;">1,416,624,816</div>
<div class="t" style="right:234.60px;top:1267.48px;font-size:24px;color:#333;font-weight:normal;font-style:normal;letter-spacing:0px;transform:scaleX(1.059);transform-origin:100% 50%;">1,372,654,408</div>
<div class="t" style="right:34.60px;top:1267.48px;font-size:24px;color:#333;font-weight:normal;font-style:normal;letter-spacing:0px;transform:scaleX(1.059);transform-origin:100% 50%;">799,227,811</div>
<div class="r" style="left:752px;top:1300px;width:239px;height:2px;background:#c4c4c4;"></div>
<div class="r" style="left:991px;top:1300px;width:1402px;height:1.5px;background:#c4c4c4;"></div>
<div class="r" style="left:2408px;top:1312px;width:12px;height:7px;background:rgba(0,0,0,0.28);filter:blur(1.2px);"></div>
<div class="r" style="left:2404px;top:-2px;width:16px;height:1316px;background:#f9f9f9;border-left:2px solid #dedede;border-bottom:2px solid #dedede;box-sizing:border-box;"></div>
<svg class="r" style="left:0px;top:0px;pointer-events:none;" width="2416" height="1578" viewBox="0 0 2416 1578"><path d="M251.97 1340.13 L340.87 1294.32 L730.11 1095.63 L1265.29 824.35 L1252.56 811.15 L1310.60 817.50 L1280.73 867.61 L1277.88 849.58 L739.31 1114.06 L346.49 1305.59 L256.43 1349.07 A5.0 5.0 0 0 1 251.97 1340.13 Z" fill="#50aff5"/></svg>
</body></html>
